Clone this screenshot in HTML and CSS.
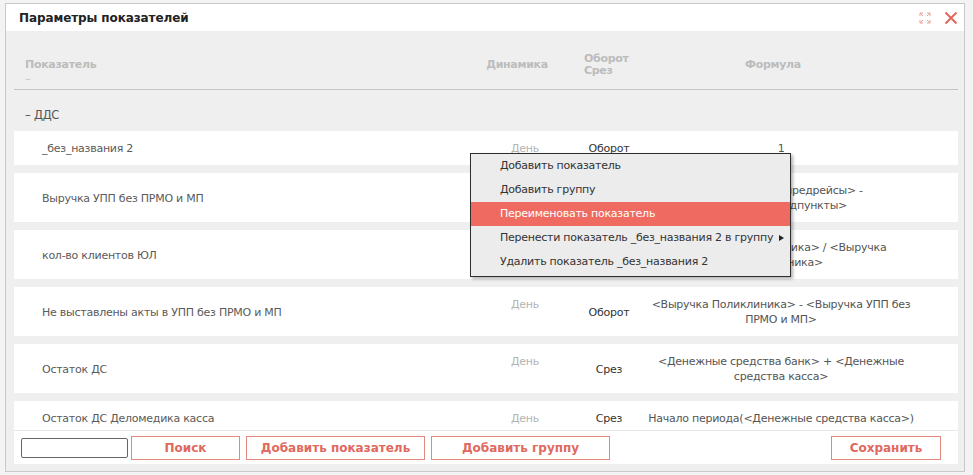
FILE: index.html
```html
<!DOCTYPE html>
<html lang="ru">
<head>
<meta charset="utf-8">
<title>Параметры показателей</title>
<link rel="stylesheet" href="styles.css">
</head>
<body>
<div class="dialog">
  <div class="titlebar">
    <span class="title">Параметры показателей</span>
    <div class="tools">
      <svg class="ico-expand" width="12" height="12" viewBox="0 0 12 12" fill="none" stroke="#eaa29b" stroke-width="1">
        <path d="M1 4V1h3M1 1l3 3M8 1h3v3M11 1L8 4M1 8v3h3M1 11l3-3M8 11h3V8M11 11L8 8"/>
      </svg>
      <svg class="ico-close" width="14" height="14" viewBox="0 0 14 14" fill="none" stroke="#e3675c" stroke-width="2">
        <path d="M1.5 1.5l11 11M12.5 1.5l-11 11"/>
      </svg>
    </div>
  </div>
  <div class="body">
    <div class="colhead">
      <div class="h-name">Показатель<div class="dash">–</div></div>
      <div class="h-dyn">Динамика</div>
      <div class="h-type">Оборот<br>Срез</div>
      <div class="h-formula">Формула</div>
    </div>
    <div class="list">
      <div class="group">– ДДС</div>
      <div class="row">
        <div class="c-name">_без_названия 2</div>
        <div class="c-dyn">День</div>
        <div class="c-type">Оборот</div>
        <div class="c-formula">1</div>
      </div>
      <div class="row">
        <div class="c-name">Выручка УПП без ПРМО и МП</div>
        <div class="c-dyn">День</div>
        <div class="c-type">Оборот</div>
        <div class="c-formula">&lt;Выручка УПП предрейсы&gt; -<br>&lt;Выручка медпункты&gt;</div>
      </div>
      <div class="row">
        <div class="c-name">кол-во клиентов ЮЛ</div>
        <div class="c-dyn">День</div>
        <div class="c-type">Оборот</div>
        <div class="c-formula">&lt;Выручка Поликлиника&gt; / &lt;Выручка<br>Поликлиника&gt;</div>
      </div>
      <div class="row">
        <div class="c-name">Не выставлены акты в УПП без ПРМО и МП</div>
        <div class="c-dyn">День</div>
        <div class="c-type">Оборот</div>
        <div class="c-formula">&lt;Выручка Поликлиника&gt; - &lt;Выручка УПП без<br>ПРМО и МП&gt;</div>
      </div>
      <div class="row">
        <div class="c-name">Остаток ДС</div>
        <div class="c-dyn">День</div>
        <div class="c-type">Срез</div>
        <div class="c-formula">&lt;Денежные средства банк&gt; + &lt;Денежные<br>средства касса&gt;</div>
      </div>
      <div class="row">
        <div class="c-name">Остаток ДС Деломедика касса</div>
        <div class="c-dyn">День</div>
        <div class="c-type">Срез</div>
        <div class="c-formula">Начало периода(&lt;Денежные средства касса&gt;)</div>
      </div>
    </div>
    <div class="footer">
      <input class="search" type="text">
      <button class="btn btn-search">Поиск</button>
      <button class="btn btn-wide">Добавить показатель</button>
      <button class="btn btn-wide">Добавить группу</button>
      <button class="btn btn-save">Сохранить</button>
    </div>
  </div>
  <div class="menu">
    <div class="mi">Добавить показатель</div>
    <div class="mi">Добавить группу</div>
    <div class="mi active">Переименовать показатель</div>
    <div class="mi sub">Перенести показатель _без_названия 2 в группу</div>
    <div class="mi">Удалить показатель _без_названия 2</div>
  </div>
</div>
</body>
</html>
```
FILE: styles.css
```css
* { box-sizing: border-box; }
html, body { margin: 0; padding: 0; }
body {
  background: #f3f3f3;
  font-family: "DejaVu Sans", Verdana, sans-serif;
  font-size: 11px;
  color: #555;
  padding: 3px 0 0 5px;
  width: 973px;
  height: 475px;
  overflow: hidden;
}
.dialog {
  position: relative;
  width: 960px;
  height: 469px;
  border: 1px solid #c9c9c9;
  background: #efefef;
  display: flex;
  flex-direction: column;
}
.titlebar {
  height: 27px;
  background: #fff;
  display: flex;
  align-items: center;
  justify-content: space-between;
  padding: 0 6px 0 13px;
  flex: none;
}
.title {
  font-weight: bold;
  font-size: 12px;
  color: #222;
  letter-spacing: -0.1px;
}
.tools { display: flex; align-items: center; gap: 13px; }
.tools svg { display: block; }
.body {
  flex: 1;
  display: flex;
  flex-direction: column;
  padding: 0 6px 7px 8px;
  min-height: 0;
}
.colhead {
  height: 59px;
  flex: none;
  border-bottom: 1px solid #c4c4c4;
  display: grid;
  grid-template-columns: 464px 78px 88px 258px 1fr;
  font-weight: bold;
  color: #bcbcbc;
  font-size: 11px;
  letter-spacing: -0.3px;
}
.colhead > div { padding-top: 27px; line-height: 14px; }
.h-name { padding-left: 11px; }
.h-name .dash { font-weight: normal; color: #c4c4c4; line-height: 14px; }
.h-dyn, .h-formula { text-align: center; }
.colhead > .h-type { text-align: left; padding-left: 28px; padding-top: 22px; line-height: 12px; }
.list {
  flex: 1;
  min-height: 0;
  overflow: hidden;
  display: flex;
  flex-direction: column;
  gap: 8px;
  letter-spacing: -0.25px;
}
.group {
  flex: none;
  height: 33px;
  padding: 18px 0 0 11px;
  line-height: 15px;
  color: #555;
  font-size: 11.5px;
}
.row {
  flex: none;
  background: #fff;
  display: grid;
  grid-template-columns: 466px 90px 78px 266px 1fr;
  align-items: center;
  padding: 10px 0 9px;
  line-height: 15px;
}
.c-name { padding-left: 28px; color: #5a5a5a; }
.c-dyn { align-self: start; text-align: center; color: #b4b4b4; }
.c-type { text-align: center; color: #333; }
.c-formula { text-align: center; color: #555; white-space: nowrap; }
.footer {
  flex: none;
  height: 34px;
  background: #fff;
  border-top: 1px solid #e8e8e8;
  display: flex;
  align-items: center;
  padding: 0 0 0 7px;
}
.search {
  width: 107px;
  height: 20px;
  border: 1px solid #666;
  border-radius: 2px;
  margin: 0 3px 0 0;
  padding: 0;
  background: #fff;
}
.btn {
  height: 24px;
  border: 1px solid #e3877f;
  background: #fff;
  color: #e0695e;
  font-family: "DejaVu Sans", Verdana, sans-serif;
  font-weight: bold;
  font-size: 12px;
  padding: 0;
  margin-right: 6px;
}
.btn-search { width: 109px; }
.btn-wide { width: 179px; }
.btn-save { width: 110px; margin-left: auto; margin-right: 17px; }
.menu {
  position: absolute;
  left: 464px;
  top: 149px;
  width: 321px;
  height: 124px;
  background: #ececec;
  border: 1px solid #2f2f2f;
  box-shadow: 2px 2px 3px rgba(0,0,0,0.3);
  padding: 0 0 2px;
  color: #333;
  letter-spacing: -0.25px;
}
.mi {
  height: 24px;
  line-height: 24px;
  padding-left: 29px;
  position: relative;
}
.mi.active { background: #ef6b61; color: #fff; }
.mi.sub::after {
  content: "";
  position: absolute;
  right: 6px;
  top: 9px;
  border-left: 5px solid #222;
  border-top: 3px solid transparent;
  border-bottom: 3px solid transparent;
}
```
